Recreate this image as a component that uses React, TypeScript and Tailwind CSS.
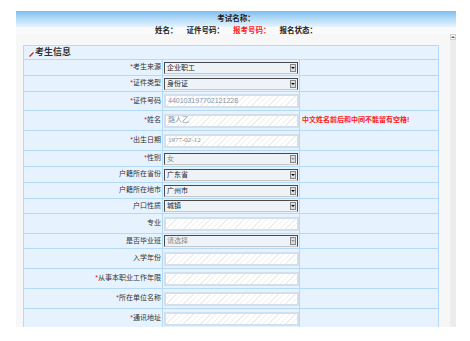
import React from 'react';

const cjk = "font-['Liberation_Sans','Noto_Sans_CJK_SC',sans-serif]";

type Row = {
  label: string;
  req?: boolean;
  kind: 'select' | 'input';
  value?: string;
  h: string;
  disabled?: boolean;
  serif?: boolean;
  hint?: string;
};

const rows: Row[] = [
  { label: '考生来源', req: true, kind: 'select', value: '企业职工', h: 'h-[16px]' },
  { label: '证件类型', req: true, kind: 'select', value: '身份证', h: 'h-[16px]' },
  { label: '证件号码', req: true, kind: 'input', value: '440103197702121228', h: 'h-[19px]' },
  { label: '姓名', req: true, kind: 'input', value: '路人乙', h: 'h-[20px]', hint: '中文姓名前后和中间不能留有空格!' },
  { label: '出生日期', req: true, kind: 'input', value: '1977-02-12', h: 'h-[20px]', serif: true },
  { label: '性别', req: true, kind: 'select', value: '女', h: 'h-[16px]', disabled: true },
  { label: '户籍所在省份', kind: 'select', value: '广东省', h: 'h-[16px]' },
  { label: '户籍所在地市', kind: 'select', value: '广州市', h: 'h-[16px]' },
  { label: '户口性质', kind: 'select', value: '城镇', h: 'h-[15px]' },
  { label: '专业', kind: 'input', h: 'h-[20px]' },
  { label: '是否毕业班', kind: 'select', value: '请选择', h: 'h-[15px]', disabled: true },
  { label: '入学年份', kind: 'input', h: 'h-[20px]' },
  { label: '从事本职业工作年限', req: true, kind: 'input', h: 'h-[20px]' },
  { label: '所在单位名称', req: true, kind: 'input', h: 'h-[20px]' },
  { label: '通讯地址', req: true, kind: 'input', h: 'h-[20px]' },
];

const FakeSelect = ({ value, disabled }: { value?: string; disabled?: boolean }) => (
  <div className="ml-[1px] flex h-[12px] w-[134px] items-stretch border border-[#4a4a4a] border-b-[#c8c8c8] bg-[#eef3f8]">
    <span className={`flex-1 pl-[2px] text-[7px] leading-[10px] ${disabled ? 'text-[#8a8a8a]' : 'text-[#222]'}`}>{value}</span>
    <span className="m-[1px] flex w-[6px] items-center justify-center border border-[#888] bg-[#dcdcdc]">
      <span className={`h-0 w-0 border-x-[2px] border-t-[2px] border-x-transparent ${disabled ? 'border-t-[#999]' : 'border-t-[#111]'}`} />
    </span>
  </div>
);

const FakeInput = ({ value, serif }: { value?: string; serif?: boolean }) => (
  <div className="ml-[1px] flex h-[14px] w-[135px] items-center border-2 border-[#d3e0ec] bg-[repeating-linear-gradient(135deg,#ffffff_0px,#ffffff_3px,#eeeeee_3px,#eeeeee_4px)] pl-[2px]">
    <span className={serif ? "font-['Liberation_Serif',serif] text-[7px] text-[#8c8c8c]" : 'text-[7px] text-[#7f93ab]'}>{value}</span>
  </div>
);

const App = () => {
  return (
    <div className={`h-[341px] w-[470px] overflow-hidden bg-white ${cjk}`}>
      <div className="ml-[16px] mt-[11px] w-[440px]">
        <div className="flex h-[16px] items-center justify-center bg-gradient-to-b from-[#7dbdf0] via-[#b6dcf8] to-[#e6f4ff] text-[7.5px] font-bold text-[#222]">
          考试名称：
        </div>
        <div className="flex h-[7px] items-center justify-center gap-[9px] bg-[#fafafa] text-[7.5px] font-bold leading-[7px] text-[#222]">
          <span>姓名：</span>
          <span>证件号码：</span>
          <span className="text-[#ff2020]">报考号码：</span>
          <span>报名状态：</span>
        </div>
        <div className="flex h-[293px] bg-[#f7f7f7]">
          <div className="flex-1 overflow-hidden pl-[7px] pr-[11px] pt-[11px]">
            <div className="border border-[#b4dafa] bg-[#e6f3fe] text-[#333]">
              <div className="flex h-[14px] items-center border-b border-[#b4dafa] pl-[5px] text-[9px] font-bold">
                <svg width="5" height="5" viewBox="0 0 5 5" className="mr-[1px] mt-[3px]">
                  <path d="M0.5 4.5 L4.5 0.5" stroke="#d0201a" strokeWidth="1.3" />
                </svg>
                考生信息
              </div>
              {rows.map((r) => (
                <div key={r.label} className={`grid grid-cols-[139px_137px_1fr] border-b border-[#b4dafa] ${r.h}`}>
                  <div className="flex items-center justify-end border-r border-[#b4dafa] pr-[1px] text-[7px]">
                    {r.req && <span className="text-[7px] text-[#e01010]">*</span>}
                    {r.label}
                  </div>
                  <div className="flex items-center border-r border-[#b4dafa]">
                    {r.kind === 'select' ? (
                      <FakeSelect value={r.value} disabled={r.disabled} />
                    ) : (
                      <FakeInput value={r.value} serif={r.serif} />
                    )}
                  </div>
                  <div className="flex items-center pl-[2px] text-[7px] font-bold text-[#ff1a1a]">{r.hint}</div>
                </div>
              ))}
            </div>
          </div>
          <div className="w-[6px] bg-[#ececec]">
            <div className="flex h-[6px] items-center justify-center border border-[#d0d0d0] bg-[#f4f4f4]">
              <span className="h-0 w-0 border-x-[2px] border-b-[2px] border-x-transparent border-b-[#2a6fc0]" />
            </div>
          </div>
        </div>
      </div>
    </div>
  );
};

export default App;
